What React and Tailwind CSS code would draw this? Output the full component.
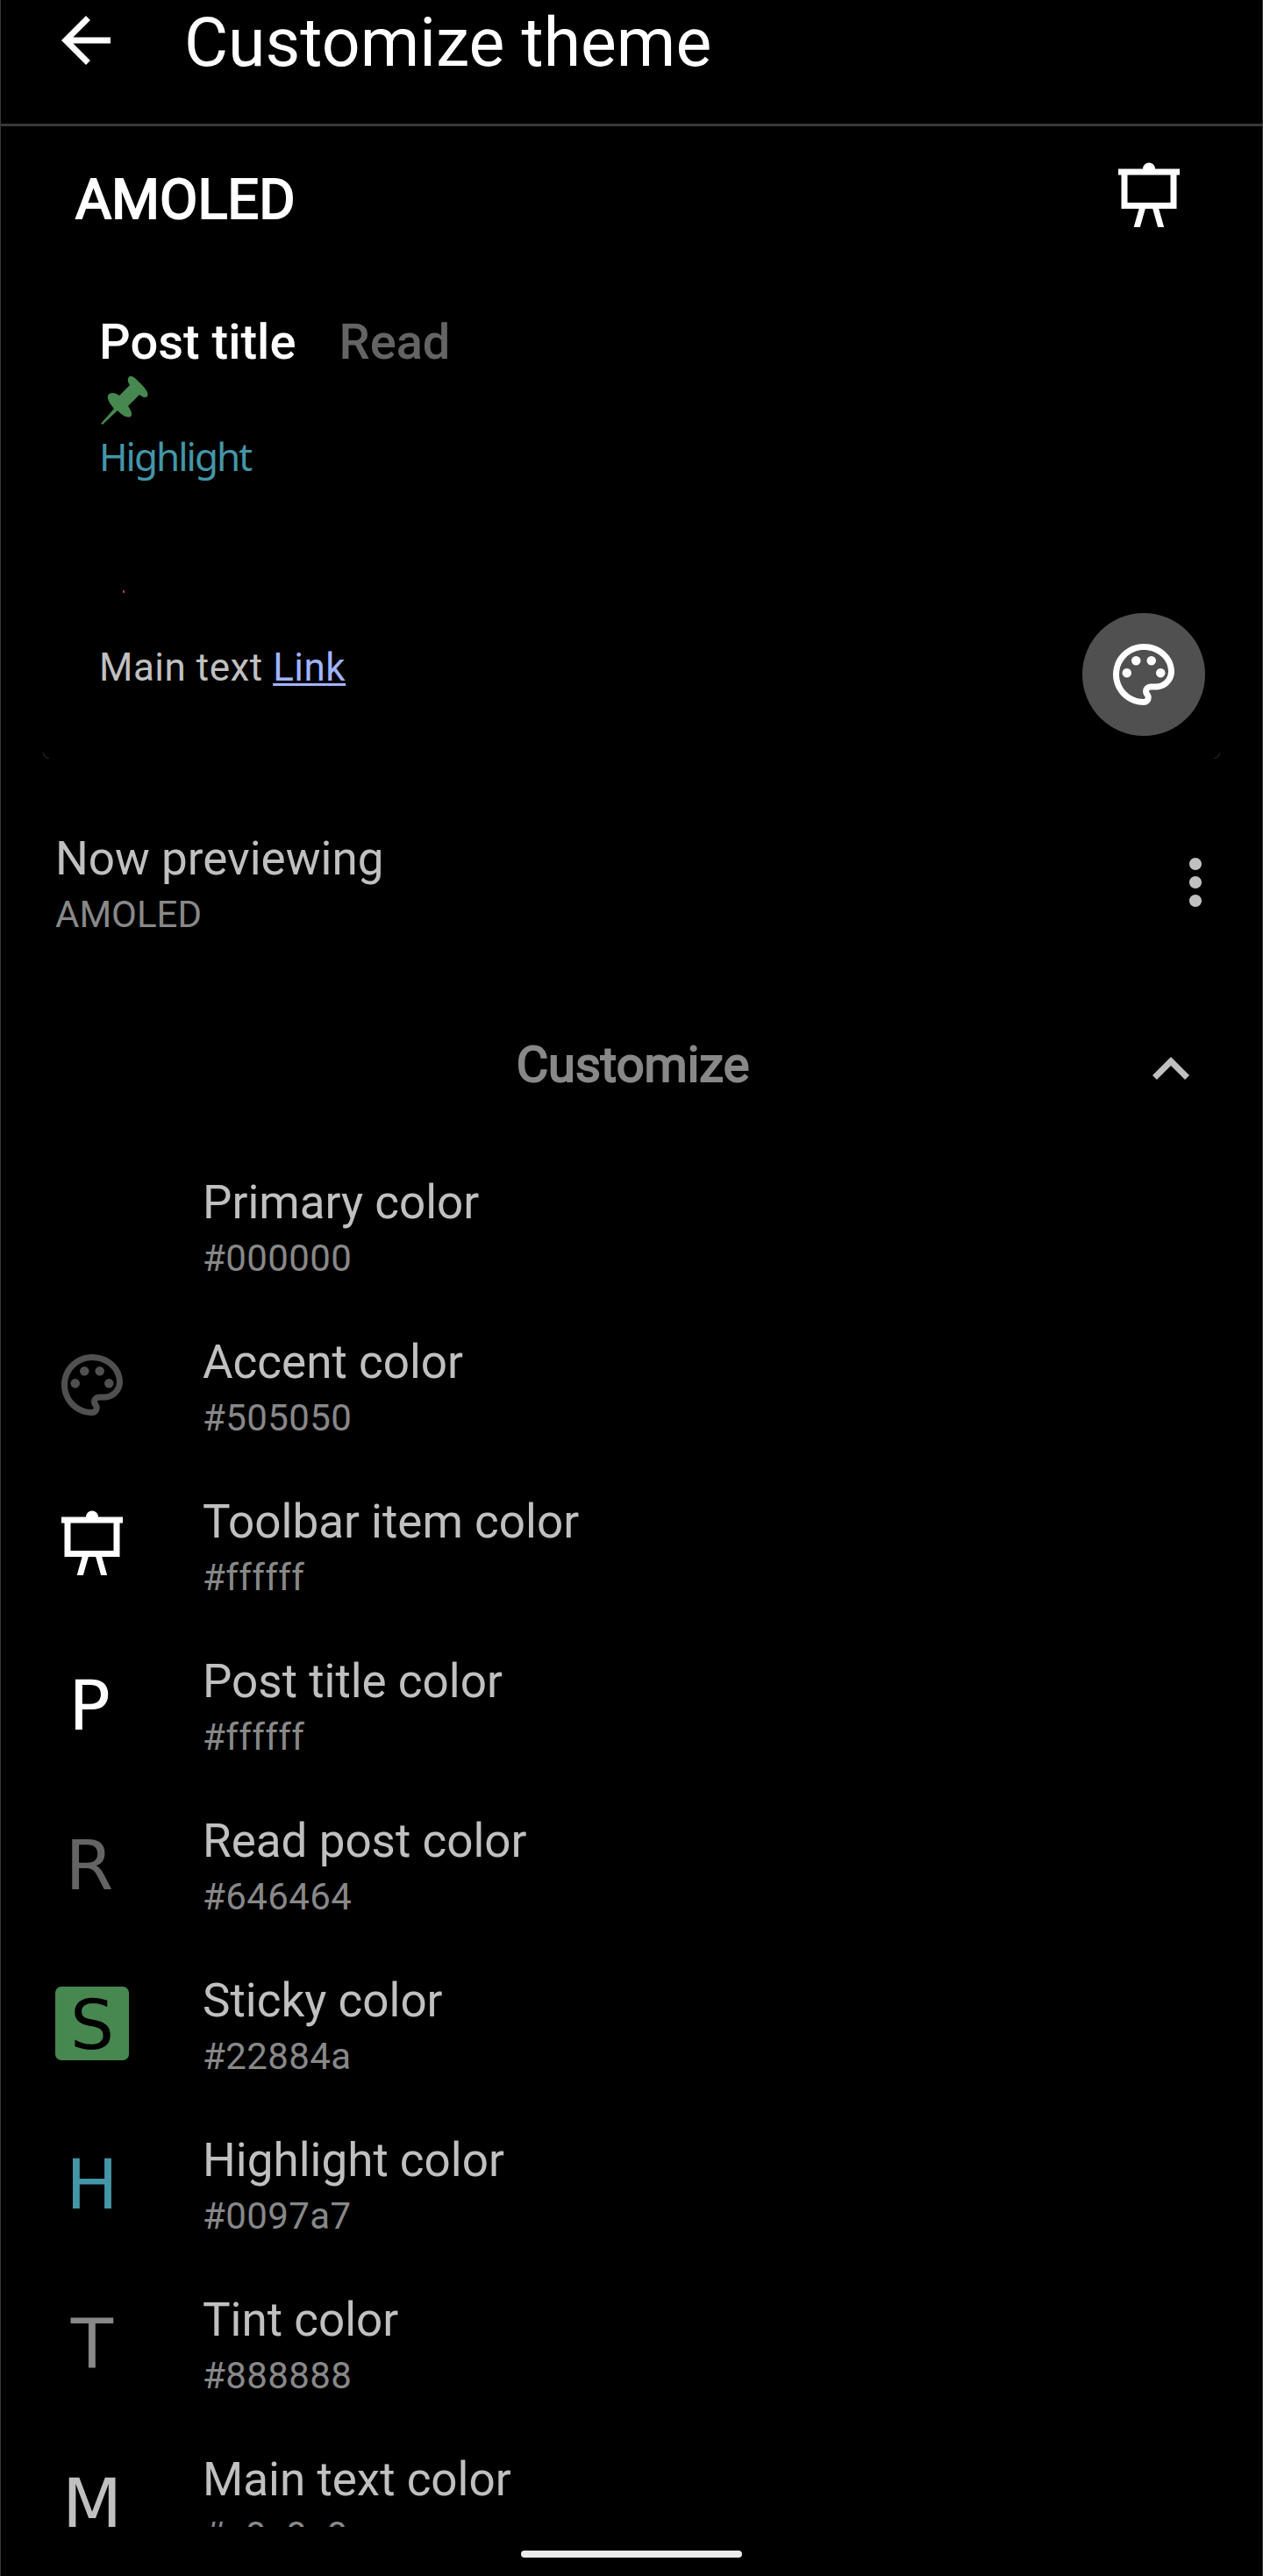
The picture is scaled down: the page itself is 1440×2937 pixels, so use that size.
import { MdArrowBack, MdExpandLess, MdMoreVert, MdOutlinePalette } from "react-icons/md";

function Easel({ className }) {
  return (
    <svg viewBox="0 0 24 24" className={className} fill="currentColor">
      <path d="M10 3a2 2 0 0 1 4 0h8v2h-1v11h-5.8l1.7 6H14.9l-1.7-6h-2.4l-1.7 6H7.05l1.7-6H3V5H2V3zM5 5v9h14V5z" fillRule="evenodd" />
    </svg>
  );
}

function Pin({ className }) {
  return (
    <svg viewBox="0 0 54 55" className={className} fill="currentColor">
      <path d="M0 54L15 37C10 31 7 26 8 22C10 18 16 18 21 22L33 10C30 6 30 2 33 0C36-1 39 2 45 8C51 14 55 19 53 23C51 25 47 24 44 21L31 34C35 39 36 44 34 46C29 48 24 44 19 39L2 55z" />
    </svg>
  );
}

function Letter({ children, className }) {
  return (
    <div className={`flex size-21 items-center justify-center pt-[4px] font-['DejaVu_Sans'] text-[79px] leading-[84px] ${className}`}>
      {children}
    </div>
  );
}

const rows = [
  { title: "Primary color", value: "#000000", icon: <div className="size-21" /> },
  { title: "Accent color", value: "#505050", icon: <MdOutlinePalette className="size-21 text-[#505050]" /> },
  { title: "Toolbar item color", value: "#ffffff", icon: <Easel className="size-21 text-white" /> },
  { title: "Post title color", value: "#ffffff", icon: <Letter className="pr-[6px] text-white">P</Letter> },
  { title: "Read post color", value: "#646464", icon: <Letter className="pr-[6px] text-[#646464]">R</Letter> },
  { title: "Sticky color", value: "#22884a", icon: <Letter className="rounded-[7px] bg-[#468850] text-black">S</Letter> },
  { title: "Highlight color", value: "#0097a7", icon: <Letter className="text-[#4496a7]">H</Letter> },
  { title: "Tint color", value: "#888888", icon: <Letter className="text-[#888888]">T</Letter> },
  { title: "Main text color", value: "#c0c0c0", icon: <Letter className="text-[#c0c0c0]">M</Letter> },
];

export default function App() {
  return (
    <div className="flex h-[2937px] w-[1440px] flex-col overflow-hidden border-x border-[#3a3a3a] bg-black font-[Roboto,sans-serif] text-[#c0c0c0]">
      <header className="flex h-[144px] shrink-0 items-start border-b-3 border-[#383838] text-white">
        <MdArrowBack className="mt-[4px] ml-[55px] size-21" />
        <h1 className="ml-[70px] text-[77px] leading-[98px] whitespace-nowrap">Customize theme</h1>
      </header>

      <section className="h-[724px] shrink-0 px-[48px] pt-px">
        <div className="flex h-[168px] items-center justify-between pr-[39px] pl-[37px] text-white">
          <h2 className="mb-[3px] text-[63px] leading-[80px] [-webkit-text-stroke:2px_currentColor]">AMOLED</h2>
          <Easel className="mb-[10px] size-21" />
        </div>
        <div className="relative h-[552px] pl-[64px]">
          <div className="flex gap-[49px] pt-[44px] text-[56px] leading-[66px] font-medium">
            <span className="text-white">Post title</span>
            <span className="text-[#646464]">Read</span>
          </div>
          <Pin className="mt-[6px] ml-[2px] h-[55px] w-[54px] text-[#468850]" />
          <p className="mt-[6px] font-['Noto_Sans'] text-[44px] leading-[60px] tracking-[-2px] text-[#4496a7]">Highlight</p>
          <div className="mt-[123px] ml-[27px] h-[3px] w-[2px] bg-[#b04030]" />
          <p className="mt-[59px] text-[44px] leading-[52px] tracking-[0.5px]">
            Main text{" "}
            <span className="text-[#a0b4ff] underline decoration-3 underline-offset-[3px]">Link</span>
          </p>
          <div className="absolute top-[386px] right-[17px] flex size-35 items-center justify-center rounded-full bg-[#505050] text-white">
            <MdOutlinePalette className="size-21" />
          </div>
          <div className="absolute bottom-0 left-0 size-[7px] rounded-bl-[7px] border-b border-l border-[#2a2a2a]" />
          <div className="absolute right-0 bottom-0 size-[7px] rounded-br-[7px] border-r border-b border-[#2a2a2a]" />
        </div>
      </section>

      <section className="flex h-[275px] shrink-0 items-center justify-between pr-[34px] pl-[62px]">
        <div className="pt-[8px]">
          <p className="text-[53px] leading-[64px]">Now previewing</p>
          <p className="mt-[2px] text-[42px] leading-[60px] text-[#888888]">AMOLED</p>
        </div>
        <MdMoreVert className="size-21" />
      </section>

      <section className="flex h-[163px] shrink-0 items-start pl-[149px]">
        <h3 className="mt-[39px] flex-1 text-center text-[56px] leading-[64px] text-[#888888] [-webkit-text-stroke:2px_currentColor]">
          Customize
        </h3>
        <MdExpandLess className="mt-[34px] mr-[62px] size-21" />
      </section>

      <ul className="h-[1575px] shrink-0 overflow-hidden">
        {rows.map((row) => (
          <li key={row.title} className="flex h-[182px] items-center pl-[62px]">
            {row.icon}
            <div className="ml-[84px] pt-[9px]">
              <p className="text-[53px] leading-[64px]">{row.title}</p>
              <p className="mt-[2px] text-[42px] leading-[60px] tracking-[0.4px] text-[#888888]">{row.value}</p>
            </div>
          </li>
        ))}
      </ul>

      <div className="mx-auto mt-[27px] h-[8px] w-[252px] shrink-0 rounded-full bg-[#ebebeb]" />
    </div>
  );
}
